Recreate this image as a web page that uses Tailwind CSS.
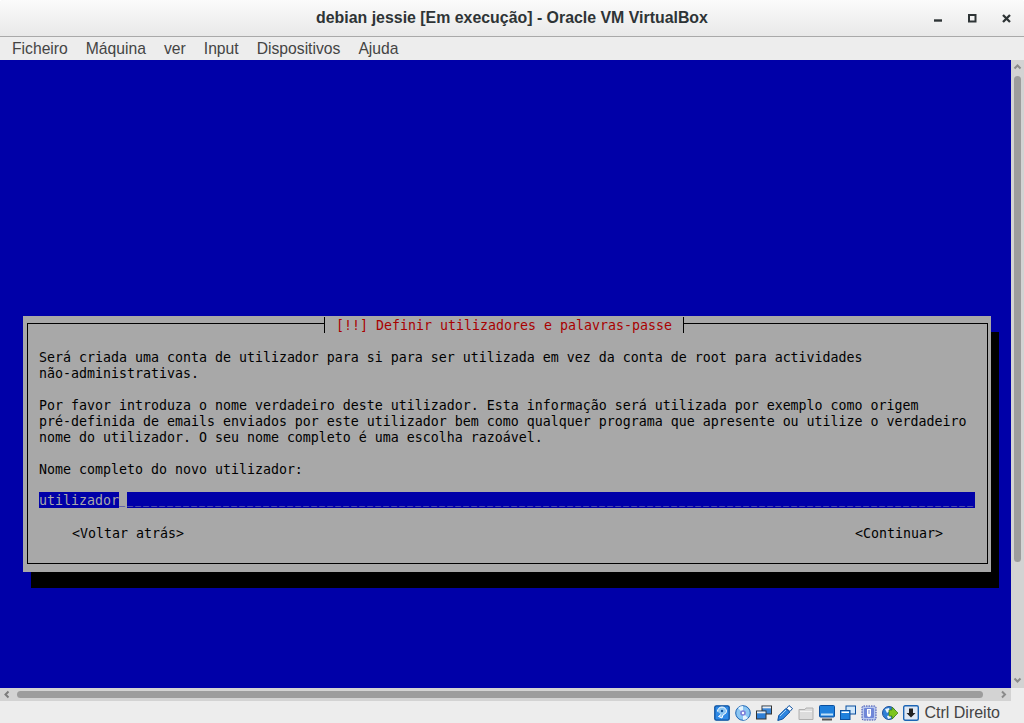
<!DOCTYPE html>
<html lang="pt">
<head>
    <meta charset="UTF-8">
    <meta name="viewport" content="width=device-width, initial-scale=1.0">
    <title>debian jessie [Em execução] - Oracle VM VirtualBox</title>
    <script src="https://cdn.jsdelivr.net/npm/@tailwindcss/browser@4"></script>
</head>
<body class="bg-white overflow-hidden font-['Liberation_Sans',sans-serif]">
    <div class="w-[1024px] h-[723px] flex flex-col bg-[#ededed] rounded-t-[4px] overflow-hidden">

        <!-- title bar -->
        <header class="h-[37px] shrink-0 flex items-center relative bg-gradient-to-b from-[#fbfbfb] to-[#e9e9e9] border-b border-[#a9a9a9]">
            <h1 class="w-full text-center text-[15.9px] font-bold text-[#2e3436]">debian jessie [Em execução] - Oracle VM VirtualBox</h1>
            <div class="absolute right-0 top-0 h-[36px] flex items-center">
                <svg class="w-[124px] h-[36px]" viewBox="0 0 124 36" fill="none" stroke="#2e3436">
                    <path d="M34 20.5h8" stroke-width="2.4"/>
                    <rect x="69" y="15" width="6.5" height="6.5" stroke-width="2"/>
                    <path d="M103 15l7 7M110 15l-7 7" stroke-width="2.3"/>
                </svg>
            </div>
        </header>

        <!-- menu -->
        <nav class="h-[23px] shrink-0 flex items-center gap-[18px] pl-[12px] text-[15.7px] text-[#444] bg-[#ededed]">
            <span>Ficheiro</span>
            <span>Máquina</span>
            <span>ver</span>
            <span>Input</span>
            <span>Dispositivos</span>
            <span>Ajuda</span>
        </nav>

        <div class="h-[628px] shrink-0 flex">
            <!-- guest screen -->
            <main class="w-[1011px] h-full bg-[#0000a8] pt-[256px] pl-[23px] font-['DejaVu_Sans_Mono',monospace] text-[13.29px] leading-[16px] text-black">
                <section class="w-[968px] h-[256px] bg-[#a8a8a8] shadow-[8px_16px_0_#000] pt-[7px] pl-[4px]">
                    <div class="w-[961px] h-[241px] border border-black relative pl-[11px] pr-[11px] pt-[26px]">
                        <div class="absolute left-[296px] top-[-7px] w-[360px] h-[16px] bg-[#a8a8a8] border-x border-black text-center text-[#a80000] leading-[18px]">[!!] Definir utilizadores e palavras-passe</div>
                        <p class="whitespace-pre">Será criada uma conta de utilizador para si para ser utilizada em vez da conta de root para actividades
não-administrativas.

Por favor introduza o nome verdadeiro deste utilizador. Esta informação será utilizada por exemplo como origem
pré-definida de emails enviados por este utilizador bem como qualquer programa que apresente ou utilize o verdadeiro
nome do utilizador. O seu nome completo é uma escolha razoável.

Nome completo do novo utilizador:</p>
                        <div class="mt-[14px] flex w-[936px] h-[16px] whitespace-pre text-[#a8a8a8] leading-[18px]">
                            <span class="w-[80px] h-[16px] bg-[#0000a8]">utilizador</span>
                            <span class="w-[8px] h-[16px] text-[#0000a8] text-[10px] tracking-[1.98px]">_</span>
                            <span class="w-[848px] h-[16px] bg-[#0000a8] text-[10px] tracking-[1.98px]">__________________________________________________________________________________________________________</span>
                        </div>
                        <div class="mt-[18px] flex justify-between pl-[33px] pr-[33px]">
                            <span>&lt;Voltar atrás&gt;</span>
                            <span>&lt;Continuar&gt;</span>
                        </div>
                    </div>
                </section>
            </main>

            <!-- vertical scrollbar -->
            <aside class="w-[13px] h-full bg-[#d3d3d3] flex flex-col items-center">
                <svg class="w-[13px] h-[16px] shrink-0" viewBox="0 0 13 16" fill="none" stroke="#8a8a8a" stroke-width="2"><path d="M3.5 8.5l3-3 3 3"/></svg>
                <div class="w-[7px] h-[486px] rounded-full bg-[#9c9c9c]"></div>
                <div class="flex-1"></div>
                <svg class="w-[13px] h-[14px] shrink-0" viewBox="0 0 13 14" fill="none" stroke="#8a8a8a" stroke-width="2"><path d="M3.5 4.5l3 3 3-3"/></svg>
            </aside>
        </div>

        <!-- horizontal scrollbar -->
        <div class="h-[13px] w-[1011px] shrink-0 bg-[#d3d3d3] flex items-center">
            <svg class="w-[17px] h-[13px] shrink-0" viewBox="0 0 17 13" fill="none" stroke="#7c7c7c" stroke-width="2"><path d="M8.5 3.5l-3 3 3 3"/></svg>
            <div class="w-[966px] h-[7px] rounded-full bg-[#9c9c9c]"></div>
            <svg class="w-[28px] h-[13px] shrink-0" viewBox="0 0 28 13" fill="none" stroke="#8a8a8a" stroke-width="2"><path d="M19 3.5l3 3-3 3"/></svg>
        </div>

        <!-- status bar -->
        <footer class="flex-1 flex items-center justify-end pr-[24px] gap-[5px] bg-[#ededed]">
            <!-- hard disk -->
            <svg class="w-4 h-4" viewBox="0 0 16 16"><rect x="0.800" y="0.800" width="14.400" height="14.400" rx="1.500" fill="#2f8ae6" stroke="#0a4f9e" stroke-width="1.300"/><path d="M3.500 6.500a4.500 4.500 0 0 1 9 0c0 2-2.500 2.500-3.500 3.500l-1 3-3.500-1.500 2.500-2" fill="#8cc6f2" stroke="#fff"/><circle cx="8" cy="6" r="1.200" fill="#0a4f9e"/></svg>
            <!-- optical disc -->
            <svg class="w-4 h-4" viewBox="0 0 16 16"><circle cx="8" cy="8" r="7.300" fill="#8cc6f2" stroke="#1c65b5"/><path d="M8 8L3 3a7 7 0 0 1 5-2zM8 8l5 5a7 7 0 0 1-5 2z" fill="#e6f4fd"/><circle cx="8" cy="8" r="2.800" fill="#7c7ed8"/><circle cx="8" cy="8" r="1.200" fill="#fff"/></svg>
            <!-- network windows -->
            <svg class="w-4 h-4" viewBox="0 0 16 16"><rect x="6" y="1" width="9.500" height="8" fill="#3a86d8" stroke="#333"/><rect x="6.500" y="1.500" width="8.500" height="1.800" fill="#eee"/><rect x="0.500" y="6" width="9.500" height="8" fill="#2f7fd6" stroke="#333"/><rect x="1" y="6.500" width="8.500" height="1.800" fill="#eee"/></svg>
            <!-- usb plug -->
            <svg class="w-4 h-4" viewBox="0 0 16 16"><path d="M0.800 15.500l1-5 7-7 4 3.500-7 7z" fill="#2f86e0" stroke="#0a4f9e"/><path d="M9.500 3.500l2.500-3 3.500 3-2.500 3z" fill="#fff" stroke="#0a4f9e"/><path d="M3 11l6-6" stroke="#a9d6f7"/></svg>
            <!-- shared folder -->
            <svg class="w-4 h-4" viewBox="0 0 16 16"><path d="M1 4.500V14.500h14V3H8L7 4.500z" fill="#dcdcdc" stroke="#b0b0b0"/><path d="M2 6.500h12" stroke="#f4f4f4"/></svg>
            <!-- display -->
            <svg class="w-4 h-4" viewBox="0 0 16 16"><rect x="0.500" y="0.500" width="15" height="11.500" rx="1" fill="#1f80dc" stroke="#0a4f9e"/><rect x="2" y="8.500" width="12" height="2" fill="#bfe0f8"/><path d="M3 14.500h10" stroke="#555" stroke-width="2"/></svg>
            <!-- capture -->
            <svg class="w-4 h-4" viewBox="0 0 16 16"><rect x="6" y="1" width="9.500" height="8" fill="#cfe6fa" stroke="#0a4f9e"/><rect x="0.500" y="5.500" width="9.500" height="9" fill="#1f80dc" stroke="#0a4f9e"/><rect x="1.500" y="6.500" width="7.500" height="1.500" fill="#fff"/></svg>
            <!-- cpu -->
            <svg class="w-4 h-4" viewBox="0 0 16 16"><rect x="1" y="1" width="14" height="14" rx="1.500" fill="#b9c8ee" stroke="#3344aa" stroke-dasharray="1.500 1"/><rect x="3" y="3" width="10" height="10" rx="1" fill="#6f86d8"/><path d="M6 4v6a2 2 0 0 0 4 0V4z" fill="#fff"/><path d="M8 5v4" stroke="#6f86d8"/></svg>
            <!-- globe with arrow -->
            <svg class="w-4 h-4" viewBox="0 0 16 16"><circle cx="7" cy="8" r="6.500" fill="#2f7fd6" stroke="#1c4f99"/><path d="M3 4l4-1 1 3-3 2zM5 11l3-1 1 3-3 1z" fill="#e9f3fb"/><path d="M7 5h3V2l6 6-6 6v-3H7z" fill="#7cc41e" stroke="#3a7a10" stroke-width=".7"/></svg>
            <!-- keyboard capture -->
            <svg class="w-4 h-4" viewBox="0 0 16 16"><rect x="0.700" y="0.700" width="14.600" height="14.600" rx="1.500" fill="#dfe8f3" stroke="#1c65b5" stroke-width="1.400"/><path d="M6 3.500h4V8h2.500L8 12.500 3.500 8H6z" fill="#222"/></svg>
            <span class="text-[16px] text-[#444]">Ctrl Direito</span>
        </footer>
    </div>
</body>
</html>
